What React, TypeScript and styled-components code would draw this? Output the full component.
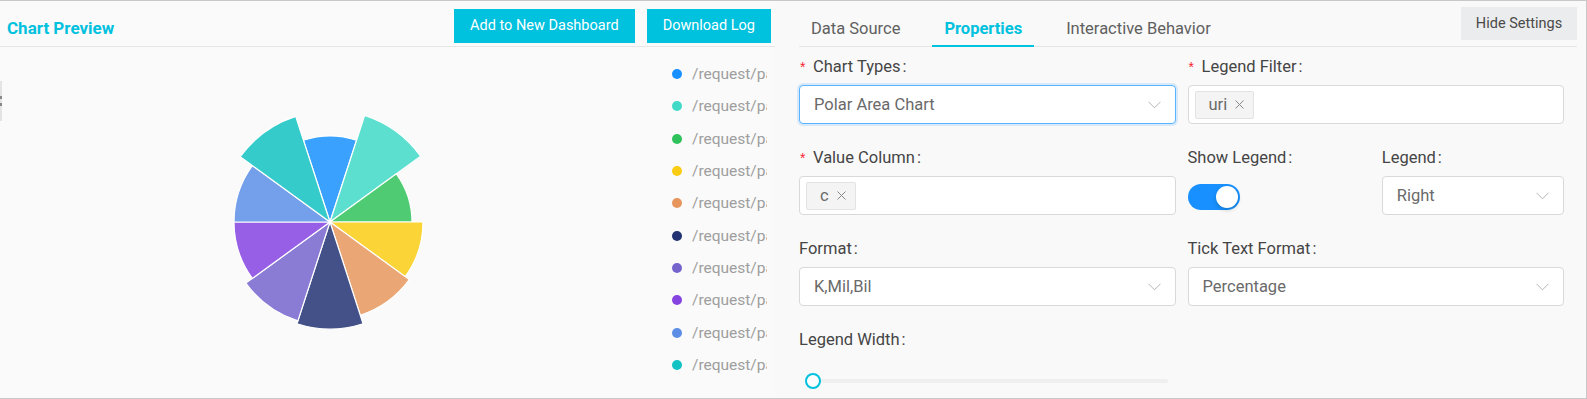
import React from "react";
import styled, { createGlobalStyle, css } from "styled-components";

const GlobalStyle = createGlobalStyle`
  html, body { margin: 0; padding: 0; background: #ffffff; }
  body { font-family: Roboto, "Liberation Sans", Arial, sans-serif; }
  * { box-sizing: border-box; }
`;

const CYAN = "#00c1de";

const Frame = styled.div`
  position: relative;
  width: 1587px;
  height: 399px;
  display: flex;
  background: #fafafa;
  border-top: 1px solid #c8c8c8;
  border-right: 1px solid #c8c8c8;
  border-bottom: 1px solid #c8c8c8;
  overflow: hidden;
`;

const Grip = styled.div`
  position: absolute;
  left: 0;
  top: 80px;
  width: 2px;
  height: 40px;
  background: #e4e4e4;
  display: flex;
  flex-direction: column;
  justify-content: center;
  gap: 4px;
  &::before, &::after {
    content: "";
    display: block;
    width: 2px;
    height: 3px;
    background: #888;
  }
`;

const LeftPanel = styled.section`
  width: 775px;
  flex: none;
  display: flex;
  flex-direction: column;
`;

const PreviewHeader = styled.header`
  height: 46px;
  flex: none;
  display: flex;
  align-items: center;
  justify-content: space-between;
  padding: 4px 4px 0 7px;
  border-bottom: 1px solid #e6e6e6;
`;

const Title = styled.h2`
  margin: 4px 0 0 0;
  font-size: 17px;
  font-weight: 700;
  color: ${CYAN};
`;

const ButtonGroup = styled.div`
  display: flex;
  gap: 12px;
`;

const PrimaryButton = styled.button`
  height: 34px;
  padding: 0 16px;
  border: none;
  background: ${CYAN};
  color: #ffffff;
  font-family: inherit;
  font-size: 14.5px;
  cursor: pointer;
`;

const PreviewBody = styled.div`
  flex: 1;
  display: flex;
  overflow: hidden;
`;

const ChartSvg = styled.svg`
  flex: none;
  display: block;
`;

const LegendList = styled.ul`
  list-style: none;
  margin: 0;
  padding: 11px 0 0 0;
  width: 95px;
  flex: none;
  overflow: hidden;
`;

const LegendItem = styled.li`
  height: 32.3px;
  display: flex;
  align-items: center;
  gap: 10px;
  white-space: nowrap;
  font-size: 15.5px;
  color: #9e9e9e;
`;

const Dot = styled.span<{ $color: string }>`
  width: 10px;
  height: 10px;
  border-radius: 50%;
  flex: none;
  background: ${(p) => p.$color};
`;

const RightPanel = styled.section`
  position: relative;
  flex: 1;
  padding: 0 9px 0 24px;
  background: #f9f9f9;
`;

const TabBar = styled.nav`
  height: 46px;
  display: flex;
  gap: 20px;
  border-bottom: 1px solid #e6e6e6;
`;

const Tab = styled.div<{ $active?: boolean }>`
  position: relative;
  display: flex;
  align-items: center;
  padding: 9px 12px 0;
  font-size: 16.5px;
  color: #606060;
  ${(p) =>
    p.$active &&
    css`
      color: ${CYAN};
      font-weight: 700;
      &::after {
        content: "";
        position: absolute;
        left: 0;
        right: 0;
        bottom: -1px;
        height: 2px;
        background: ${CYAN};
      }
    `}
`;

const HideButton = styled.button`
  position: absolute;
  top: 6px;
  right: 9px;
  width: 116px;
  height: 33px;
  border: none;
  background: #ebeced;
  color: #4a4a4a;
  font-family: inherit;
  font-size: 14.5px;
  cursor: pointer;
`;

const Form = styled.div`
  display: grid;
  grid-template-columns: repeat(4, 1fr);
  column-gap: 12px;
  padding: 9px 13px 0 0;
`;

const Field = styled.div<{ $span: number }>`
  grid-column: span ${(p) => p.$span};
  margin-bottom: 23px;
`;

const Label = styled.div`
  height: 22px;
  line-height: 22px;
  font-size: 16.5px;
  color: #454545;
  white-space: nowrap;
`;

const Required = styled.span`
  display: inline-block;
  width: 14px;
  padding-left: 1px;
  color: #f5222d;
  font-family: "Liberation Sans", Arial, sans-serif;
  font-size: 14px;
`;

const Colon = styled.span`
  margin-left: 2px;
`;

const Control = styled.div<{ $focused?: boolean }>`
  margin-top: 7px;
  height: 39px;
  display: flex;
  align-items: center;
  justify-content: space-between;
  padding: 0 14px;
  background: #ffffff;
  border: 1px solid #d9d9d9;
  border-radius: 4px;
  font-size: 16.5px;
  color: #6a6a6a;
  ${(p) =>
    p.$focused &&
    css`
      border-color: #58b4ff;
      box-shadow: 0 0 0 2px rgba(24, 144, 255, 0.15);
    `}
`;

const TagBox = styled(Control)`
  justify-content: flex-start;
  padding: 0 6px;
`;

const Tag = styled.span`
  height: 28px;
  display: inline-flex;
  align-items: center;
  gap: 8px;
  padding: 0 9px 0 13px;
  background: #f4f4f4;
  border: 1px solid #e3e3e3;
  border-radius: 2px;
  font-size: 16.5px;
  color: #6a6a6a;
`;

const SwitchTrack = styled.div`
  position: relative;
  margin-top: 15px;
  width: 52px;
  height: 26px;
  border-radius: 13px;
  background: #1890ff;
`;

const SwitchKnob = styled.span`
  position: absolute;
  top: 2px;
  right: 2px;
  width: 22px;
  height: 22px;
  border-radius: 50%;
  background: #ffffff;
  box-shadow: 0 2px 4px rgba(0, 35, 11, 0.2);
`;

const SliderWrap = styled.div`
  position: relative;
  margin: 22px 8px 0 8px;
  height: 16px;
  display: flex;
  align-items: center;
`;

const SliderTrack = styled.div`
  width: 100%;
  height: 4px;
  border-radius: 2px;
  background: #efefef;
`;

const SliderHandle = styled.span`
  position: absolute;
  left: -2px;
  top: 0;
  width: 16px;
  height: 16px;
  border-radius: 50%;
  background: #ffffff;
  border: 2px solid ${CYAN};
`;

const Chevron = () => (
  <svg width="13" height="8" viewBox="0 0 13 8" fill="none">
    <path d="M0.5 0.8 L6.5 6.8 L12.5 0.8" stroke="#b4b4b4" strokeWidth="1" />
  </svg>
);

const CloseX = () => (
  <svg width="9" height="9" viewBox="0 0 9 9" fill="none">
    <path d="M0.5 0.5 L8.5 8.5 M8.5 0.5 L0.5 8.5" stroke="#888" strokeWidth="1" />
  </svg>
);

const COLORS = [
  "#1890FF",
  "#41D9C7",
  "#2FC25B",
  "#FACC14",
  "#E6965C",
  "#223273",
  "#7564CC",
  "#8543E0",
  "#5C8EE6",
  "#13C2C2",
];
const RADII = [86, 112, 82, 93, 98, 107, 104, 96, 96, 111];

const CX = 330;
const CY = 175;

function slicePath(i: number, r: number) {
  const a0 = ((-18 + 36 * i - 90) * Math.PI) / 180;
  const a1 = ((18 + 36 * i - 90) * Math.PI) / 180;
  const x0 = CX + r * Math.cos(a0);
  const y0 = CY + r * Math.sin(a0);
  const x1 = CX + r * Math.cos(a1);
  const y1 = CY + r * Math.sin(a1);
  return `M${CX} ${CY} L${x0.toFixed(2)} ${y0.toFixed(2)} A${r} ${r} 0 0 1 ${x1.toFixed(
    2
  )} ${y1.toFixed(2)} Z`;
}

const PolarChart = () => (
  <ChartSvg width={672} height={351} viewBox="0 0 672 351">
    {RADII.map((r, i) => (
      <path
        key={i}
        d={slicePath(i, r)}
        fill={COLORS[i]}
        fillOpacity={0.85}
        stroke="#ffffff"
        strokeWidth={1.2}
      />
    ))}
  </ChartSvg>
);

export default function App() {
  return (
    <>
      <GlobalStyle />
      <Frame>
        <Grip />
        <LeftPanel>
          <PreviewHeader>
            <Title>Chart Preview</Title>
            <ButtonGroup>
              <PrimaryButton>Add to New Dashboard</PrimaryButton>
              <PrimaryButton>Download Log</PrimaryButton>
            </ButtonGroup>
          </PreviewHeader>
          <PreviewBody>
            <PolarChart />
            <LegendList>
              {COLORS.map((c, i) => (
                <LegendItem key={i}>
                  <Dot $color={c} />
                  /request/path
                </LegendItem>
              ))}
            </LegendList>
          </PreviewBody>
        </LeftPanel>

        <RightPanel>
          <TabBar>
            <Tab>Data Source</Tab>
            <Tab $active>Properties</Tab>
            <Tab>Interactive Behavior</Tab>
          </TabBar>
          <HideButton>Hide Settings</HideButton>

          <Form>
            <Field $span={2}>
              <Label>
                <Required>*</Required>Chart Types<Colon>:</Colon>
              </Label>
              <Control $focused>
                Polar Area Chart
                <Chevron />
              </Control>
            </Field>
            <Field $span={2}>
              <Label>
                <Required>*</Required>Legend Filter<Colon>:</Colon>
              </Label>
              <TagBox>
                <Tag>
                  uri
                  <CloseX />
                </Tag>
              </TagBox>
            </Field>

            <Field $span={2}>
              <Label>
                <Required>*</Required>Value Column<Colon>:</Colon>
              </Label>
              <TagBox>
                <Tag>
                  c
                  <CloseX />
                </Tag>
              </TagBox>
            </Field>
            <Field $span={1}>
              <Label>
                Show Legend<Colon>:</Colon>
              </Label>
              <SwitchTrack>
                <SwitchKnob />
              </SwitchTrack>
            </Field>
            <Field $span={1}>
              <Label>
                Legend<Colon>:</Colon>
              </Label>
              <Control>
                Right
                <Chevron />
              </Control>
            </Field>

            <Field $span={2}>
              <Label>
                Format<Colon>:</Colon>
              </Label>
              <Control>
                K,Mil,Bil
                <Chevron />
              </Control>
            </Field>
            <Field $span={2}>
              <Label>
                Tick Text Format<Colon>:</Colon>
              </Label>
              <Control>
                Percentage
                <Chevron />
              </Control>
            </Field>

            <Field $span={2}>
              <Label>
                Legend Width<Colon>:</Colon>
              </Label>
              <SliderWrap>
                <SliderTrack />
                <SliderHandle />
              </SliderWrap>
            </Field>
          </Form>
        </RightPanel>
      </Frame>
    </>
  );
}
